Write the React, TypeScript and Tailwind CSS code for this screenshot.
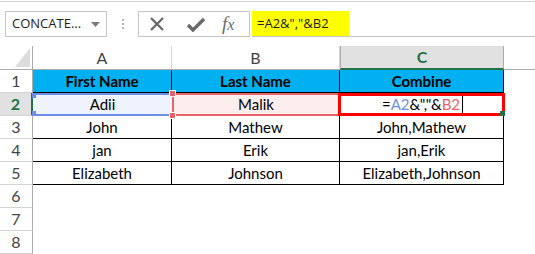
import React from "react";

const rows = [
  ["John", "Mathew", "John,Mathew"],
  ["jan", "Erik", "jan,Erik"],
  ["Elizabeth", "Johnson", "Elizabeth,Johnson"],
];

function RowHead({ n, active }: { n: number; active?: boolean }) {
  return (
    <div
      className={
        active
          ? "flex items-center justify-center border-b border-[#d4d4d4] border-r-2 border-r-[#217346] bg-[#e1e1e1] text-[16px] font-bold text-[#217346]"
          : "flex items-center justify-center border-b border-r border-[#d4d4d4] border-r-[#ababab] text-[16px] text-[#444]"
      }
    >
      {n}
    </div>
  );
}

export default function App() {
  return (
    <div
      className="relative h-[254px] w-[535px] overflow-hidden bg-white text-[15px] text-black"
      style={{ fontFamily: "Lato, 'Noto Sans', sans-serif" }}
    >
      <div className="mt-px h-px bg-[#d4d4d4]" />

      {/* formula bar */}
      <div className="mt-[9px] flex h-[26px] items-start">
        <div
          className="ml-[5px] flex h-[26px] w-[102px] items-center justify-between border border-[#c6c6c6] pl-[6px] pr-[6px] text-[13px] text-[#222]"
          style={{ fontFamily: "'Open Sans', sans-serif" }}
        >
          <span>CONCATE...</span>
          <svg width="9" height="5" viewBox="0 0 9 5">
            <path d="M0 0h9L4.5 5z" fill="#7a7a7a" />
          </svg>
        </div>
        <div className="flex h-[26px] w-[31px] flex-col items-center justify-center gap-[2px]">
          <span className="h-[2px] w-[2px] bg-[#b5b5b5]" />
          <span className="h-[2px] w-[2px] bg-[#b5b5b5]" />
          <span className="h-[2px] w-[2px] bg-[#b5b5b5]" />
        </div>
        <div className="flex h-[26px] w-[112px] items-center border border-[#c6c6c6] pl-[10px]">
          <svg width="16" height="16" viewBox="0 0 16 16">
            <path d="M2 2L14 14M14 2L2 14" stroke="#666" strokeWidth="2.2" />
          </svg>
          <svg className="ml-[22px]" width="18" height="15" viewBox="0 0 18 15">
            <path d="M1 8l5 5L17 2" stroke="#6a6a6a" strokeWidth="3.4" fill="none" />
          </svg>
          <span
            className="ml-[17px] text-[19px] italic text-[#6a6a6a]"
            style={{ fontFamily: "'Liberation Serif', serif" }}
          >
            f<span className="text-[16px]">x</span>
          </span>
        </div>
        <div className="ml-[2px] flex h-[26px] flex-1 items-start border-b border-[#c6c6c6]">
          <div
            className="flex h-[25px] w-[97px] items-center bg-[#ffff00] pl-[5px] text-[13px] text-[#222]"
            style={{ fontFamily: "'Open Sans', sans-serif" }}
          >
            =A2&amp;","&amp;B2
          </div>
        </div>
      </div>

      {/* sheet */}
      <div className="mt-[9px] grid grid-cols-[33px_139px_168px_164px_1fr] grid-rows-[24px_repeat(8,23px)]">
        {/* column headers */}
        <div className="relative border-b border-r border-[#ababab]">
          <svg className="absolute left-[15px] top-[2px]" width="15" height="19" viewBox="0 0 15 19">
            <path d="M15 0V19H0z" fill="#dcdcdc" />
          </svg>
        </div>
        <div className="flex items-center justify-center border-b border-r border-[#ababab] border-r-[#d4d4d4] text-[16px] text-[#444]">A</div>
        <div className="flex items-center justify-center border-b border-r border-[#ababab] border-r-[#d4d4d4] text-[16px] text-[#444]">B</div>
        <div className="flex items-center justify-center border-b-2 border-l border-r border-[#ababab] border-b-[#217346] bg-[#e1e1e1] text-[16px] font-bold text-[#217346]">C</div>
        <div className="border-b border-[#ababab]" />

        {/* row 1 */}
        <RowHead n={1} />
        <div className="flex items-center justify-center border-b border-r border-black bg-[#00b0f0] font-bold">First Name</div>
        <div className="flex items-center justify-center border-b border-r border-black bg-[#00b0f0] font-bold">Last Name</div>
        <div className="flex items-center justify-center border-b border-r border-black bg-[#00b0f0] font-bold">Combine</div>
        <div />

        {/* row 2 */}
        <RowHead n={2} active />
        <div className="relative flex items-center justify-center border-y-2 border-[#6d8ee6] bg-[#eef3fd]">
          Adii
          <span className="absolute -left-[1px] -top-[2px] h-[5px] w-[4px] bg-[#6d8ee6]" />
          <span className="absolute -bottom-[2px] -left-[1px] h-[5px] w-[4px] bg-[#6d8ee6]" />
        </div>
        <div className="relative flex items-center justify-center border-2 border-[#e8626b] bg-[#fdeeee]">
          Malik
          <span className="absolute -left-[5px] -top-[5px] h-[7px] w-[7px] border border-white bg-[#e8626b]" />
          <span className="absolute -bottom-[5px] -left-[5px] h-[7px] w-[7px] border border-white bg-[#e8626b]" />
        </div>
        <div className="relative -ml-[2px] -mr-[1px] flex items-center justify-center border-[3px] border-[#ff0000]">
          <span className="ml-[2px]">
            =<span className="text-[#6d8ee6]">A2</span>&amp;","&amp;<span className="text-[#e8626b]">B2</span>
          </span>
          <span className="ml-[2px] h-[17px] w-px bg-black" />
          <span className="absolute -bottom-[3px] -right-[3px] h-[5px] w-[5px] bg-[#217346]" />
        </div>
        <div />

        {rows.map((r, i) => (
          <React.Fragment key={i}>
            <RowHead n={i + 3} />
            {r.map((c, j) => (
              <div key={j} className="flex items-center justify-center border-b border-r border-black">
                {c}
              </div>
            ))}
            <div />
          </React.Fragment>
        ))}

        {[6, 7, 8].map((n) => (
          <React.Fragment key={n}>
            <RowHead n={n} />
            <div />
            <div />
            <div />
            <div />
          </React.Fragment>
        ))}
      </div>
    </div>
  );
}
